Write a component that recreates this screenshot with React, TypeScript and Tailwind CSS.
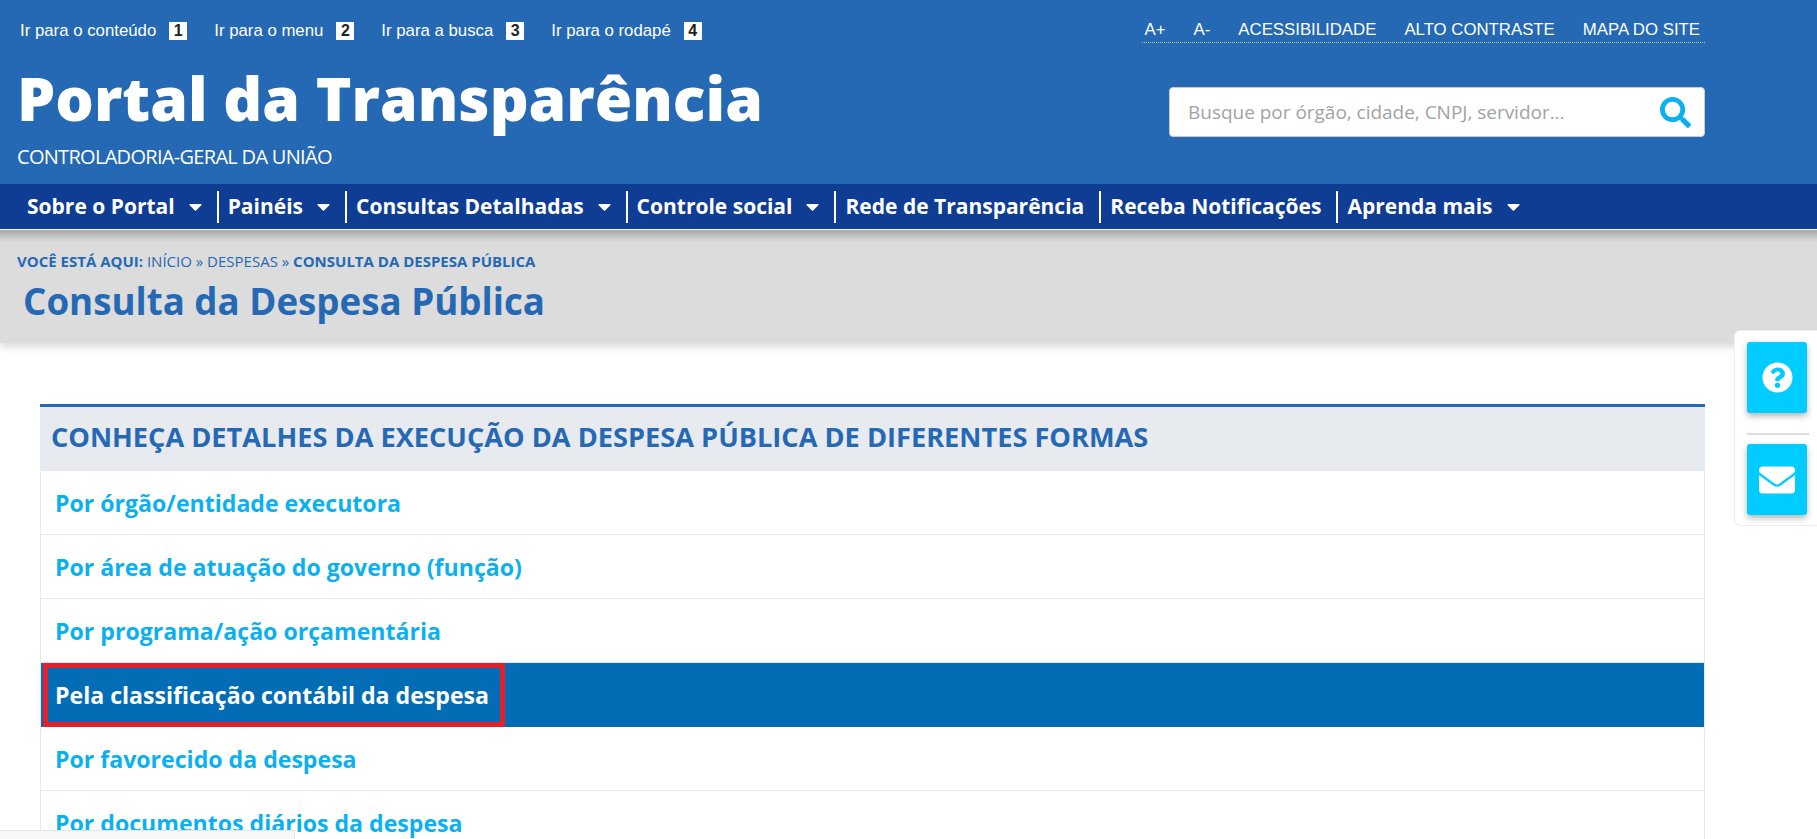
import { FaSearch, FaQuestionCircle, FaEnvelope, FaCaretDown } from "react-icons/fa";

const skipLinks = [
  { label: "Ir para o conteúdo", n: "1" },
  { label: "Ir para o menu", n: "2" },
  { label: "Ir para a busca", n: "3" },
  { label: "Ir para o rodapé", n: "4" },
];

const tools = ["A+", "A-", "ACESSIBILIDADE", "ALTO CONTRASTE", "MAPA DO SITE"];

const menu = [
  { label: "Sobre o Portal", caret: true },
  { label: "Painéis", caret: true },
  { label: "Consultas Detalhadas", caret: true },
  { label: "Controle social", caret: true },
  { label: "Rede de Transparência", caret: false },
  { label: "Receba Notificações", caret: false },
  { label: "Aprenda mais", caret: true },
];

const rows = [
  "Por órgão/entidade executora",
  "Por área de atuação do governo (função)",
  "Por programa/ação orçamentária",
  "Pela classificação contábil da despesa",
  "Por favorecido da despesa",
  "Por documentos diários da despesa",
];

export default function App() {
  return (
    <div className="relative h-[839px] overflow-hidden bg-white font-['Open_Sans',sans-serif]">
      {/* Header */}
      <header className="h-[184px] bg-[#2569b4] text-white">
        <div className="flex justify-between pl-5 pr-[112px] pt-[18px]">
          <ul className="flex gap-[27px] font-['Liberation_Sans',sans-serif] text-[16.8px] leading-[22px]">
            {skipLinks.map((l) => (
              <li key={l.n} className="flex items-center gap-[13px]">
                {l.label}
                <span className="flex h-[18px] w-[18px] items-center justify-center bg-white text-[16px] font-bold text-[#222]">
                  {l.n}
                </span>
              </li>
            ))}
          </ul>
          <ul className="flex h-[25px] gap-7 border-b border-dotted border-white/60 pl-[3px] pr-[5px] pt-px font-['Liberation_Sans',sans-serif] text-[16.8px] leading-[22px]">
            {tools.map((t) => (
              <li key={t}>{t}</li>
            ))}
          </ul>
        </div>
        <div className="flex items-start justify-between pl-[17px] pr-[112px] pt-[20px]">
          <div>
            <h1 className="text-[60.6px] leading-[70px] font-extrabold">Portal da Transparência</h1>
            <p className="mt-[13px] text-[20px] leading-[22px] tracking-[-0.7px]">CONTROLADORIA-GERAL DA UNIÃO</p>
          </div>
          <div className="mt-[24px] flex h-[50px] w-[536px] items-center justify-between rounded-[4px] border border-[#ccc] bg-white pl-[18px] pr-[13px]">
            <span className="text-[19px] tracking-[-0.02px] text-[#a3a3a3]">Busque por órgão, cidade, CNPJ, servidor...</span>
            <FaSearch className="text-[#0db0ee]" size={31} />
          </div>
        </div>
      </header>

      {/* Menu */}
      <nav className="flex h-[45px] items-center bg-[#0f3d94] pl-[18px] text-[21px] font-bold text-white">
        {menu.map((m, i) => (
          <div key={m.label} className={`flex h-[32px] items-center pl-[9px] ${i > 0 ? "border-l-2 border-white" : ""} ${m.caret ? "pr-[11px]" : "pr-[15px]"}`}>
            {m.label}
            {m.caret && <FaCaretDown className="ml-[10px]" size={21} />}
          </div>
        ))}
      </nav>

      {/* Breadcrumb */}
      <section className="mt-px h-[113px] bg-[#dcdcdc] bg-[linear-gradient(to_bottom,#a8a8a8,#dcdcdc_12px)] pl-[17px] pt-[21px] text-[#2569b4] shadow-[0_4px_8px_rgba(0,0,0,0.15)]">
        <p className="text-[15px] leading-[20px]">
          <b>VOCÊ ESTÁ AQUI:</b> INÍCIO » DESPESAS » <b>CONSULTA DA DESPESA PÚBLICA</b>
        </p>
        <h2 className="ml-[6px] mt-[5px] text-[36.7px] leading-[50px] font-bold">Consulta da Despesa Pública</h2>
      </section>

      {/* Card */}
      <main className="ml-10 mr-[112px] mt-[61px] border-t-[3px] border-[#2569b4]">
        <h3 className="flex h-[64px] items-center bg-[#e7eaee] pb-[4px] pl-[11px] text-[27.2px] font-bold text-[#2569b4]">
          CONHEÇA DETALHES DA EXECUÇÃO DA DESPESA PÚBLICA DE DIFERENTES FORMAS
        </h3>
        <ul className="border-x border-[#e8e8e8]">
          {rows.map((r, i) =>
            i === 3 ? (
              <li key={r} className="h-[64px] bg-[#026db5] pl-[2px] text-[23.1px] font-bold text-white">
                <span className="flex h-full w-[462px] items-center border-[5px] border-[#e3202c] pt-px pl-[7px]">{r}</span>
              </li>
            ) : (
              <li key={r} className="flex h-[64px] items-center border-b border-[#e8e8e8] pl-[14px] pt-[2px] text-[23.1px] font-bold text-[#0db0ee]">
                {r}
              </li>
            ),
          )}
        </ul>
      </main>

      {/* Floating buttons */}
      <aside className="absolute right-0 top-[330px] flex h-[196px] w-[83px] flex-col rounded-l-[6px] border border-r-0 border-[#eee] bg-white pl-[12px] pt-[11px]">
        <div className="flex h-[71px] w-[60px] items-center justify-center rounded-[3px] bg-[#00ccff] text-white shadow-[0_3px_6px_rgba(0,0,0,0.3)]">
          <FaQuestionCircle size={31} />
        </div>
        <div className="mb-[9px] mt-[20px] h-[2px] w-[62px] bg-[#ddd]" />
        <div className="flex h-[71px] w-[60px] items-center justify-center rounded-[3px] bg-[#00ccff] text-white shadow-[0_3px_6px_rgba(0,0,0,0.3)]">
          <FaEnvelope size={36} />
        </div>
      </aside>

      {/* Bottom-left bar */}
      <div className="absolute bottom-0 left-0 h-[9px] w-[295px] border-r border-t border-[#e5e5e5] bg-[#f7f7f7]" />
    </div>
  );
}
